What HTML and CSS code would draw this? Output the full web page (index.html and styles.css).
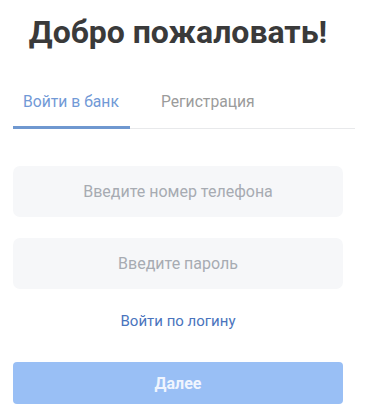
FILE: index.html
```html
<!DOCTYPE html>
<html lang="ru">
<head>
    <meta charset="UTF-8">
    <meta name="viewport" content="width=device-width, initial-scale=1.0">
    <title>Вход</title>
    <link rel="stylesheet" href="styles.css">
</head>
<body>

    <div class="login">
        <h1>Добро пожаловать!</h1>

        <!-- Tabs -->
        <div class="tabs">
            <div class="tab active">Войти в банк</div>
            <div class="tab">Регистрация</div>
        </div>

        <!-- Form -->
        <form class="form" onsubmit="return false">
            <input class="field" type="tel" placeholder="Введите номер телефона">
            <input class="field" type="password" placeholder="Введите пароль">
            <a class="link" href="#">Войти по логину</a>
            <button class="btn" type="submit" disabled>Далее</button>
        </form>
    </div>

</body>
</html>
```

FILE: styles.css
```css
body {
    margin: 0;
    font-family: Roboto, "Liberation Sans", Arial, sans-serif;
    background: #fff;
}
.login {
    width: 330px;
    padding: 12px 13px 0;
}
h1 {
    margin: 0;
    font-size: 32px;
    line-height: 40px;
    font-weight: 700;
    color: #3a3a3a;
    text-align: center;
}
.tabs {
    display: flex;
    gap: 20px;
    margin: 40px -12px 0 0;
    border-bottom: 1px solid #e8e9eb;
}
.tab {
    padding: 0 11px 14px 11px;
    font-size: 15.7px;
    line-height: 20px;
    color: #9b9b9b;
    margin-bottom: -1px;
    border-bottom: 3px solid transparent;
    cursor: pointer;
}
.tab.active {
    padding-left: 10px;
    color: #7199d6;
    border-bottom-color: #6f98d0;
}
.form {
    display: flex;
    flex-direction: column;
    margin-top: 37px;
}
.field {
    box-sizing: border-box;
    height: 51px;
    padding: 0;
    border: none;
    border-radius: 7px;
    background: #f6f7f9;
    font-family: inherit;
    font-size: 16px;
    text-align: center;
    color: #333;
    outline: none;
    margin-bottom: 21px;
}
.field::placeholder {
    color: #a7abb2;
}
.link {
    margin-top: 1px;
    font-size: 15px;
    line-height: 20px;
    color: #4a74bd;
    text-decoration: none;
    text-align: center;
}
.btn {
    margin-top: 31px;
    height: 42px;
    border: none;
    border-radius: 4px;
    background: #99bff5;
    color: #f0f5fe;
    font-family: inherit;
    font-size: 16px;
    font-weight: 700;
}
```
